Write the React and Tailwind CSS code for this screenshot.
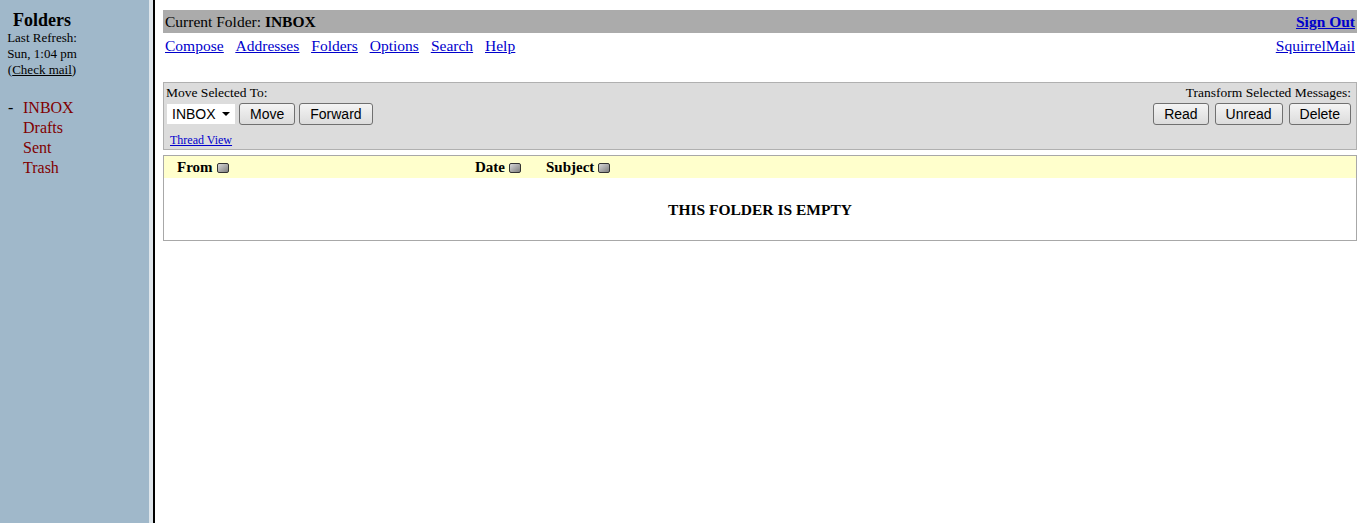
import React from 'react';

const SortIcon = () => (
    <span className="inline-block w-[12px] h-[10px] ml-[4px] rounded-[2px] border border-[#333] bg-gradient-to-br from-[#d8d8d8] to-[#808080] align-[-1px]" />
);

const Button = ({ children }) => (
    <button className="h-[22px] px-[10px] rounded-[3px] border border-[#707070] bg-gradient-to-b from-[#f4f4f4] to-[#dcdcdc] text-[14px] text-black font-['Liberation_Sans',Arial,sans-serif] leading-none">
        {children}
    </button>
);

const App = () => {
    return (
        <div className="flex h-[523px] w-full bg-white text-black font-['Liberation_Serif','Times_New_Roman',serif]">
            {/* Left folder frame */}
            <div className="w-[149px] shrink-0 bg-[#a0b8ca] flex flex-col">
                <div className="w-[84px] flex flex-col items-center pt-[10px] text-center">
                    <h1 className="font-bold text-[18px] leading-[20px]">Folders</h1>
                    <p className="text-[13px] leading-[16px]">Last Refresh:</p>
                    <p className="text-[13px] leading-[16px]">Sun, 1:04 pm</p>
                    <p className="text-[13px] leading-[16px]">
                        (<span className="underline">Check mail</span>)
                    </p>
                </div>
                <div className="mt-[20px] pl-[8px] text-[16px] leading-[20px] text-[#800000]">
                    <div className="flex">
                        <span className="w-[15px] text-black">-</span>
                        <span>INBOX</span>
                    </div>
                    <div className="pl-[15px]">Drafts</div>
                    <div className="pl-[15px]">Sent</div>
                    <div className="pl-[15px]">Trash</div>
                </div>
            </div>

            {/* Frame divider */}
            <div className="w-[4px] shrink-0 bg-[#dfe6eb]" />
            <div className="w-[2px] shrink-0 bg-black" />

            {/* Right message frame */}
            <div className="flex-1 pl-[8px] pr-[5px] pt-[10px]">
                <div className="flex items-center justify-between h-[23px] bg-[#ababab] px-[2px] text-[15.5px]">
                    <span>
                        Current Folder: <b>INBOX</b>
                    </span>
                    <a className="font-bold text-[#0000cc] underline">Sign Out</a>
                </div>
                <div className="flex justify-between mt-[3px] text-[15.5px] leading-[20px] text-[#0000cc] px-[2px]">
                    <div className="flex gap-[12px] underline">
                        <a>Compose</a>
                        <a>Addresses</a>
                        <a>Folders</a>
                        <a>Options</a>
                        <a>Search</a>
                        <a>Help</a>
                    </div>
                    <a className="underline">SquirrelMail</a>
                </div>

                {/* Action panel */}
                <div className="mt-[26px] h-[68px] bg-[#dcdcdc] border border-[#b0b0b0] px-[2px] pt-[2px] flex justify-between">
                    <div className="flex flex-col">
                        <span className="text-[13.5px] leading-[15px]">Move Selected To:</span>
                        <div className="flex items-center gap-[4px] mt-[3px]">
                            <div className="h-[20px] w-[68px] ml-[1px] bg-white flex items-center justify-between px-[5px] text-[14px] font-['Liberation_Sans',Arial,sans-serif]">
                                <span>INBOX</span>
                                <span className="w-0 h-0 border-l-[4px] border-r-[4px] border-t-[4px] border-l-transparent border-r-transparent border-t-black" />
                            </div>
                            <Button>Move</Button>
                            <Button>Forward</Button>
                        </div>
                        <a className="mt-[8px] ml-[4px] text-[12px] leading-[15px] text-[#0000cc] underline">Thread View</a>
                    </div>
                    <div className="flex flex-col items-end pr-[3px]">
                        <span className="text-[13.5px] leading-[15px]">Transform Selected Messages:</span>
                        <div className="flex items-center gap-[6px] mt-[3px]">
                            <Button>Read</Button>
                            <Button>Unread</Button>
                            <Button>Delete</Button>
                        </div>
                    </div>
                </div>

                {/* Message list */}
                <div className="mt-[5px] h-[86px] border border-[#a8a8a8]">
                    <div className="h-[22px] bg-[#ffffcc] flex items-center text-[15px] font-bold">
                        <div className="w-[311px] pl-[13px]">
                            From<SortIcon />
                        </div>
                        <div className="w-[71px]">
                            Date<SortIcon />
                        </div>
                        <div>
                            Subject<SortIcon />
                        </div>
                    </div>
                    <div className="text-center font-bold text-[15.5px] mt-[20px]">THIS FOLDER IS EMPTY</div>
                </div>
            </div>
        </div>
    );
};

export default App;
